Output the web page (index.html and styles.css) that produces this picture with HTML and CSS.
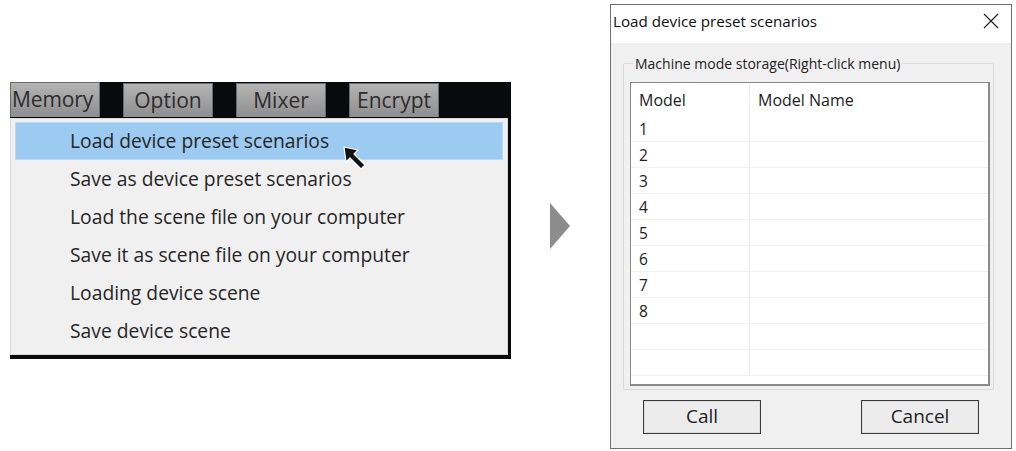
FILE: index.html
```html
<!DOCTYPE html>
<html>
<head>
<meta charset="utf-8">
<link rel="stylesheet" href="styles.css">
</head>
<body>
<div class="page">
  <div class="menu-panel">
    <div class="menubar">
      <div class="tab tab-first">Memory</div>
      <div class="tab">Option</div>
      <div class="tab">Mixer</div>
      <div class="tab">Encrypt</div>
    </div>
    <div class="dropdown-wrap">
      <div class="dropdown">
        <div class="item active">Load device preset scenarios
          <svg class="cursor" width="26" height="28" viewBox="0 0 26 28">
            <polygon points="2,2 16,5 12,9 23,20 19,24 8,13 4,17" fill="#111" stroke="#fff" stroke-width="1.2" stroke-linejoin="round"/>
          </svg>
        </div>
        <div class="item">Save as device preset scenarios</div>
        <div class="item">Load the scene file on your computer</div>
        <div class="item">Save it as scene file on your computer</div>
        <div class="item">Loading device scene</div>
        <div class="item">Save device scene</div>
      </div>
    </div>
  </div>

  <div class="arrow"></div>

  <div class="dialog">
    <div class="titlebar">
      <span class="title">Load device preset scenarios</span>
      <svg class="close" width="16" height="16" viewBox="0 0 16 16">
        <path d="M1 1 L15 15 M15 1 L1 15" stroke="#222" stroke-width="1.2" fill="none"/>
      </svg>
    </div>
    <div class="dialog-body">
      <fieldset class="group">
        <legend>Machine mode storage(Right-click menu)</legend>
        <div class="list">
          <div class="row header"><div class="c1">Model</div><div class="c2">Model Name</div></div>
          <div class="row"><div class="c1">1</div><div class="c2"></div></div>
          <div class="row"><div class="c1">2</div><div class="c2"></div></div>
          <div class="row"><div class="c1">3</div><div class="c2"></div></div>
          <div class="row"><div class="c1">4</div><div class="c2"></div></div>
          <div class="row"><div class="c1">5</div><div class="c2"></div></div>
          <div class="row"><div class="c1">6</div><div class="c2"></div></div>
          <div class="row"><div class="c1">7</div><div class="c2"></div></div>
          <div class="row"><div class="c1">8</div><div class="c2"></div></div>
          <div class="row"><div class="c1"></div><div class="c2"></div></div>
          <div class="row"><div class="c1"></div><div class="c2"></div></div>
        </div>
      </fieldset>
      <div class="buttons">
        <div class="btn">Call</div>
        <div class="btn">Cancel</div>
      </div>
    </div>
  </div>
</div>
</body>
</html>
```

FILE: styles.css
```css
* { box-sizing: border-box; }
html, body { margin: 0; padding: 0; background: #fff; }
body { font-family: "Open Sans", "Noto Sans", sans-serif; color: #222; }

.page {
  display: flex;
  align-items: flex-start;
  width: 1016px;
  height: 451px;
  overflow: hidden;
}

/* Left menu screenshot */
.menu-panel {
  margin-left: 10px;
  margin-top: 82px;
  width: 501px;
  height: 277px;
  background: #080a0c;
  display: flex;
  flex-direction: column;
}
.menubar {
  height: 36px;
  display: flex;
  gap: 23px;
  padding-top: 1px;
}
.tab {
  width: 90px;
  height: 34px;
  background: linear-gradient(#b4b4b4, #8e8e8e);
  border: 1px solid #6a6a6a;
  border-bottom: none;
  color: #2c2c2c;
  font-size: 21px;
  line-height: 32px;
  text-align: center;
  white-space: nowrap;
  overflow: hidden;
}
.tab-first { text-align: left; padding-left: 1px; margin-top: -1px; height: 35px; letter-spacing: -0.1px; }
.dropdown-wrap {
  padding-right: 3px;
  padding-bottom: 4px;
}
.dropdown {
  height: 237px;
  background: #f0f0f0;
  border: 1px solid #d9d9d9;
  padding: 3px 4px 4px 4px;
}
.item {
  position: relative;
  height: 38px;
  line-height: 38px;
  padding-left: 55px;
  font-size: 19.3px;
  color: #262626;
}
.item.active {
  background: #9ccaf1;
  border: 1px solid #b8dbf7;
  line-height: 36px;
  padding-left: 54px;
}
.cursor {
  position: absolute;
  left: 326px;
  top: 22px;
}

/* Arrow */
.arrow {
  margin-left: 39px;
  margin-top: 203px;
  width: 0;
  height: 0;
  border-top: 23px solid transparent;
  border-bottom: 23px solid transparent;
  border-left: 20px solid #8c8c8c;
}

/* Dialog */
.dialog {
  margin-left: 40px;
  margin-top: 4px;
  width: 402px;
  height: 445px;
  border: 1px solid #6f6f6f;
  background: #f0f0f0;
  display: flex;
  flex-direction: column;
}
.titlebar {
  height: 38px;
  background: #fff;
  display: flex;
  align-items: center;
  justify-content: space-between;
  padding: 0 12px 6px 2px;
}
.title {
  font-size: 15.2px;
  color: #111;
}
.close { display: block; }
.dialog-body {
  flex: 1;
  display: flex;
  flex-direction: column;
  padding: 11px 17px 0 12px;
}
.group {
  margin: 0;
  padding: 9px 3px 4px 6px;
  border: 1px solid #dadada;
  border-radius: 2px;
  height: 336px;
}
.group legend {
  font-size: 14px;
  color: #222;
  padding: 0 2px;
  margin-left: 3px;
  letter-spacing: 0;
}
.list {
  background: #fff;
  border: 1px solid #8a8a8a;
  border-width: 1px 2px 2px 1px;
  height: 304px;
  overflow: hidden;
}
.row {
  display: flex;
  height: 26px;
  border-bottom: 1px solid #f1f1f1;
}
.row.header {
  height: 33px;
  border-bottom: none;
}
.c1 {
  width: 119px;
  border-right: 1px solid #ececec;
  padding-left: 8px;
  font-size: 15.5px;
  line-height: 26px;
  color: #222;
}
.c2 {
  flex: 1;
  padding-left: 8px;
  font-size: 15.5px;
  line-height: 26px;
}
.row.header .c1, .row.header .c2 {
  line-height: 34px;
  font-size: 16px;
}
.buttons {
  display: flex;
  justify-content: space-between;
  padding: 10px 15px 0 20px;
}
.btn {
  width: 118px;
  height: 34px;
  border: 1px solid #3a3a3a;
  box-shadow: inset 0 0 0 1px #dcdcdc;
  background: #ececec;
  text-align: center;
  font-size: 19px;
  line-height: 31px;
  color: #222;
}
```
